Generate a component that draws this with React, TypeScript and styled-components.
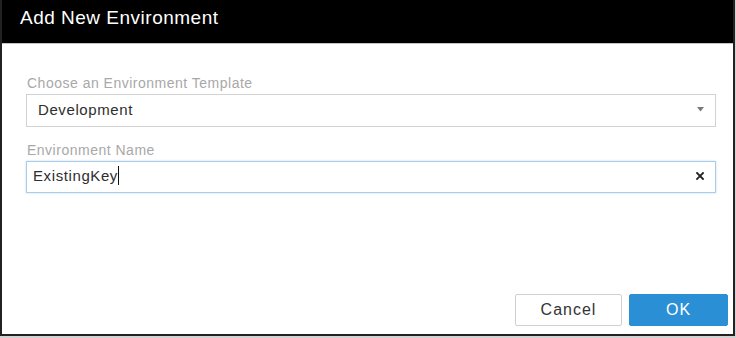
import React from 'react';
import styled, { createGlobalStyle } from 'styled-components';

const GlobalStyle = createGlobalStyle`
  html, body {
    margin: 0;
    padding: 0;
    background-color: #d2d2d2;
    font-family: "Liberation Sans", Arial, sans-serif;
  }
`;

const Dialog = styled.div`
  width: 735px;
  height: 336px;
  box-sizing: border-box;
  background-color: #fff;
  border: 2px solid #222;
  border-top: none;
  display: flex;
  flex-direction: column;
`;

const Header = styled.header`
  height: 44px;
  box-sizing: border-box;
  background-color: #000;
  border-bottom: 1px solid #c4c4c4;
  padding: 7px 18px 0;
  color: #fff;
  font-size: 19px;
  line-height: 22px;
  letter-spacing: 0.5px;
`;

const Body = styled.div`
  flex: 1;
  padding: 31px 17px 0 24px;
  display: flex;
  flex-direction: column;
  gap: 15px;
`;

const Field = styled.div`
  display: flex;
  flex-direction: column;
`;

const Label = styled.label`
  font-size: 14px;
  line-height: 16px;
  letter-spacing: 0.5px;
  color: #a8a8a8;
  margin-bottom: 3px;
  padding-left: 1px;
`;

const Box = styled.div<{ $focused?: boolean; $height: number }>`
  height: ${(p) => p.$height}px;
  box-sizing: border-box;
  display: flex;
  align-items: center;
  border: 1px solid ${(p) => (p.$focused ? '#a9cdea' : '#d2d2d2')};
  box-shadow: ${(p) => (p.$focused ? '0 0 2px rgba(120, 175, 225, 0.45)' : 'none')};
  background-color: #fff;
  padding: 0 11px 3px ${(p) => (p.$focused ? 6 : 11)}px;
`;

const Value = styled.span`
  flex: 1;
  display: flex;
  align-items: center;
  font-size: 15px;
  letter-spacing: 0.6px;
  color: #2e2e2e;
`;

const Caret = styled.span`
  display: inline-block;
  width: 1.5px;
  height: 19px;
  margin-left: 0px;
  background-color: #111;
`;

const IconWrap = styled.span`
  display: flex;
  align-items: center;
  justify-content: center;
`;

const Footer = styled.div`
  display: flex;
  justify-content: flex-end;
  gap: 7px;
  padding: 0 5px 8px 0;
`;

const Button = styled.button<{ $primary?: boolean }>`
  height: 32px;
  box-sizing: border-box;
  border-radius: 2px;
  border: 1px solid ${(p) => (p.$primary ? '#2a8fd4' : '#d0d0d0')};
  background-color: ${(p) => (p.$primary ? '#2a8fd4' : '#fff')};
  color: ${(p) => (p.$primary ? '#fff' : '#333')};
  font-family: "Liberation Sans", Arial, sans-serif;
  font-size: 16px;
  letter-spacing: 1px;
  padding: 0 0 1px;
  cursor: pointer;
  width: ${(p) => (p.$primary ? 99 : 107)}px;
`;

const App: React.FC = () => (
  <>
    <GlobalStyle />
    <Dialog>
      <Header>Add New Environment</Header>
      <Body>
        <Field>
          <Label>Choose an Environment Template</Label>
          <Box $height={33}>
            <Value>Development</Value>
            <IconWrap>
              <svg width="7" height="5" viewBox="0 0 7 5">
                <path d="M0 0 L7 0 L3.5 4.5 Z" fill="#7a7a7a" />
              </svg>
            </IconWrap>
          </Box>
        </Field>
        <Field>
          <Label>Environment Name</Label>
          <Box $height={32} $focused>
            <Value>
              ExistingKey
              <Caret />
            </Value>
            <IconWrap>
              <svg width="8" height="8" viewBox="0 0 8 8">
                <path d="M1 1 L7 7 M7 1 L1 7" stroke="#222" strokeWidth="1.8" strokeLinecap="square" />
              </svg>
            </IconWrap>
          </Box>
        </Field>
      </Body>
      <Footer>
        <Button>Cancel</Button>
        <Button $primary>OK</Button>
      </Footer>
    </Dialog>
  </>
);

export default App;
